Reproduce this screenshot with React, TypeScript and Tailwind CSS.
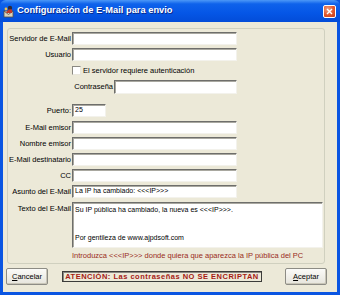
import React from "react";

const field =
  "h-[13px] bg-white border border-t-[#6e6e6b] border-l-[#6e6e6b] border-r-[#f3f2ec] border-b-[#f3f2ec] shadow-[inset_1px_1px_0_#a9a8a0] flex items-center px-[2px] text-[7px] text-black";

function Row({ label, children, mt = "mt-[3px]" }: { label: string; children?: React.ReactNode; mt?: string }) {
  return (
    <div className={`flex items-center ${mt}`}>
      <div className="w-[63px] text-right text-[7.5px] leading-none text-black whitespace-nowrap">{label}</div>
      <div className="ml-[1px]">{children}</div>
    </div>
  );
}

function Button({ first, rest }: { first: string; rest: string }) {
  return (
    <div className="h-[17px] w-[42px] rounded-[2px] border border-[#8d8c85] bg-gradient-to-b from-[#fbfbf8] to-[#e6e4dc] shadow-[inset_-1px_-1px_0_#c9c6b8] flex items-center justify-center text-[7.5px] text-black">
      <span className="underline">{first}</span>
      {rest}
    </div>
  );
}

export default function App() {
  return (
    <div className="w-[340px] h-[295px] bg-[#0a55e2] flex flex-col font-['Liberation_Sans',Arial,sans-serif] overflow-hidden">
      {/* title bar */}
      <div className="h-[22px] shrink-0 flex items-center bg-[linear-gradient(#4c98f7_0%,#0e62eb_18%,#0556e6_60%,#034cd8_100%)] rounded-t-[6px]">
        <svg width="12" height="13" viewBox="0 0 12 13" className="ml-[3px]">
          <rect x="1" y="6" width="9" height="6" fill="#d9d3c0" stroke="#5a5040" strokeWidth="0.8" />
          <path d="M1 6 L5.5 9.5 L10 6" fill="none" stroke="#5a5040" strokeWidth="0.8" />
          <circle cx="7" cy="3" r="2.2" fill="#2b2b3a" />
          <path d="M3 8 Q5 3 9 4.5 L9 8 Z" fill="#c0392b" />
          <circle cx="3" cy="4" r="1.4" fill="#f2c14e" />
        </svg>
        <div className="ml-[2px] text-white font-bold text-[9.3px] [text-shadow:1px_1px_0_#0a2a8a]">
          Configuración de E-Mail para envio
        </div>
        <div className="ml-auto mr-[4px] w-[13px] h-[13px] rounded-[2px] border border-white bg-[radial-gradient(circle_at_35%_30%,#f0a080,#e0572d_55%,#c23c1a)] flex items-center justify-center">
          <svg width="7" height="7" viewBox="0 0 7 7">
            <path d="M1 1 L6 6 M6 1 L1 6" stroke="white" strokeWidth="1.4" />
          </svg>
        </div>
      </div>

      {/* client */}
      <div className="flex-1 mx-[3px] mb-[3px] bg-[#ece9d8] flex flex-col">
        <div className="mt-[6px] ml-[4px] w-[318px] h-[236px] border border-[#d0d0bf] rounded-[3px] pt-[3px] flex flex-col">
          <Row label="Servidor de E-Mail" mt="mt-0">
            <div className={`${field} w-[165px]`} />
          </Row>
          <Row label="Usuario">
            <div className={`${field} w-[165px]`} />
          </Row>
          <div className="flex items-center mt-[5px] h-[9px] pl-[64px]">
            <div className="w-[9px] h-[9px] bg-white border border-t-[#8a8982] border-l-[#8a8982] border-r-[#e8e6dc] border-b-[#e8e6dc]" />
            <div className="ml-[2px] text-[7.5px] leading-none text-black">El servidor requiere autenticación</div>
          </div>
          <div className="flex items-center mt-[5px]">
            <div className="w-[105px] text-right text-[7.5px] leading-none text-black">Contraseña</div>
            <div className={`${field} h-[14px] w-[123px] ml-[1px]`} />
          </div>
          <Row label="Puerto:" mt="mt-[10px]">
            <div className={`${field} w-[34px]`}>25</div>
          </Row>
          <Row label="E-Mail emisor" mt="mt-[4px]">
            <div className={`${field} w-[165px]`} />
          </Row>
          <Row label="Nombre emisor">
            <div className={`${field} w-[165px]`} />
          </Row>
          <Row label="E-Mail destinatario">
            <div className={`${field} w-[165px]`} />
          </Row>
          <Row label="CC">
            <div className={`${field} w-[165px]`} />
          </Row>
          <Row label="Asunto del E-Mail">
            <div className={`${field} w-[165px] whitespace-nowrap`}>La IP ha cambiado: &lt;&lt;&lt;IP&gt;&gt;&gt;</div>
          </Row>
          <div className="flex items-start mt-[4px]">
            <div className="w-[63px] text-right text-[7.5px] leading-none text-black pt-[3px]">Texto del E-Mail</div>
            <div className="ml-[1px] w-[251px] h-[46px] bg-white border border-t-[#6e6e6b] border-l-[#6e6e6b] border-r-[#f3f2ec] border-b-[#f3f2ec] shadow-[inset_1px_1px_0_#a9a8a0] px-[2px] pt-[2px] text-[7px] leading-[10px] text-black">
              <div>Su IP pública ha cambiado, la nueva es &lt;&lt;&lt;IP&gt;&gt;&gt;.</div>
              <div className="mt-[18px]">Por gentileza de www.ajpdsoft.com</div>
            </div>
          </div>
          <div className="mt-[3px] pl-[64px] text-[7.5px] leading-[10px] text-[#9a2b22] whitespace-nowrap">
            Introduzca &lt;&lt;&lt;IP&gt;&gt;&gt; donde quiera que aparezca la IP pública del PC
          </div>
        </div>

        {/* bottom row */}
        <div className="flex items-center mt-[4px] ml-[3px]">
          <Button first="C" rest="ancelar" />
          <div className="ml-[14px] w-[200px] h-[11px] border border-[#3c3c3a] shadow-[inset_1px_1px_0_#8a8982] flex items-center justify-center text-[7.5px] font-bold text-[#a51b14] tracking-[0.5px] whitespace-nowrap">
            ATENCIÓN: Las contraseñas NO SE ENCRIPTAN
          </div>
          <div className="ml-[23px]">
            <Button first="A" rest="ceptar" />
          </div>
        </div>
      </div>
    </div>
  );
}
